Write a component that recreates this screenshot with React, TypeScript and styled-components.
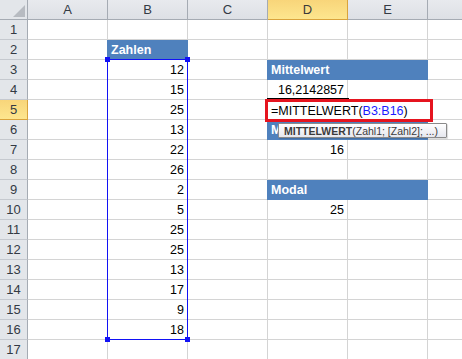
import styled, { createGlobalStyle } from 'styled-components';

const GlobalStyle = createGlobalStyle`
  html, body {
    margin: 0;
    padding: 0;
    background: #ffffff;
    overflow: hidden;
  }
  body {
    font-family: "Liberation Sans", Arial, sans-serif;
  }
`;

const columns = ['A', 'B', 'C', 'D', 'E', 'F'];
const numbers = [12, 15, 25, 13, 22, 26, 2, 5, 25, 25, 13, 17, 9, 18];

type CellData = { text?: string; fill?: boolean; align?: 'left' | 'right' };
type Corner = 'tl' | 'tr' | 'bl' | 'br';

// sheet content keyed by "row:col"
const content: Record<string, CellData> = {
  '2:B': { text: 'Zahlen', fill: true },
  '3:D': { text: 'Mittelwert', fill: true },
  '3:E': { fill: true },
  '4:D': { text: '16,2142857', align: 'right' },
  '6:D': { text: 'Median', fill: true },
  '6:E': { fill: true },
  '7:D': { text: '16', align: 'right' },
  '9:D': { text: 'Modal', fill: true },
  '9:E': { fill: true },
  '10:D': { text: '25', align: 'right' },
};
numbers.forEach((n, i) => {
  content[`${i + 3}:B`] = { text: String(n), align: 'right' };
});

const App = () => {
  const rows = Array.from({ length: 17 }, (_, i) => i + 1);
  return (
    <>
      <GlobalStyle />
      <Sheet>
        <Grid>
          <CornerCell>
            <CornerTriangle />
          </CornerCell>
          {columns.map(c => (
            // column F is cut by the window edge, its letter lies outside the view
            <ColHeader key={c} $selected={c === 'D'}>{c === 'F' ? '' : c}</ColHeader>
          ))}
          {rows.map(r => (
            <Row key={r} r={r} />
          ))}
        </Grid>

        <RangeBox>
          {(['tl', 'tr', 'bl', 'br'] as Corner[]).map(k => (
            <Handle key={k} $corner={k} />
          ))}
        </RangeBox>

        <EditTop />
        <EditBox>
          =MITTELWERT(<Ref>B3:B16</Ref>)
        </EditBox>

        <Tip>
          <b>MITTELWERT</b>(Zahl1; [Zahl2]; ...)
        </Tip>
      </Sheet>
    </>
  );
};

const Row = ({ r }: { r: number }) => (
  <>
    <RowHeader $selected={r === 5}>{r}</RowHeader>
    {columns.map(c => {
      const d = content[`${r}:${c}`] || {};
      return (
        <Cell key={c} $fill={!!d.fill} $align={d.align || 'left'}>
          {d.text}
        </Cell>
      );
    })}
  </>
);

const Sheet = styled.div`
  position: relative;
  width: 462px;
  height: 359px;
  overflow: hidden;
  font-size: 12.5px;
  color: #000;
`;

const Grid = styled.div`
  display: grid;
  grid-template-columns: 28px repeat(6, 80px);
  grid-template-rows: repeat(18, 20px);
`;

const CornerCell = styled.div`
  position: relative;
  box-sizing: border-box;
  background: #e3e6ea;
  border-right: 1px solid #a5abb3;
  border-bottom: 1px solid #a5abb3;
`;

const CornerTriangle = styled.div`
  position: absolute;
  right: 2px;
  bottom: 2px;
  width: 0;
  height: 0;
  border-left: 12px solid transparent;
  border-bottom: 12px solid #b7bbc1;
`;

const ColHeader = styled.div<{ $selected: boolean }>`
  box-sizing: border-box;
  display: flex;
  align-items: center;
  justify-content: center;
  font-size: 13px;
  color: ${p => (p.$selected ? '#3a3a3a' : '#333a44')};
  background: ${p =>
    p.$selected ? 'linear-gradient(#f8d57a, #fde68e)' : 'linear-gradient(#e8eaee, #dde0e5)'};
  border-right: 1px solid ${p => (p.$selected ? '#d9a33c' : '#a5abb3')};
  border-bottom: 1px solid ${p => (p.$selected ? '#d9a33c' : '#a5abb3')};
`;

const RowHeader = styled.div<{ $selected: boolean }>`
  box-sizing: border-box;
  display: flex;
  align-items: center;
  justify-content: center;
  font-size: 13px;
  color: #333a44;
  background: ${p => (p.$selected ? 'linear-gradient(#f8d57a, #fde68e)' : '#e3e6ea')};
  border-right: 1px solid ${p => (p.$selected ? '#d9a33c' : '#a5abb3')};
  border-bottom: 1px solid ${p => (p.$selected ? '#d9a33c' : '#c5c9cf')};
`;

const Cell = styled.div<{ $fill: boolean; $align: 'left' | 'right' }>`
  box-sizing: border-box;
  display: flex;
  align-items: flex-end;
  justify-content: ${p => (p.$align === 'right' ? 'flex-end' : 'flex-start')};
  padding: 0 3px 2px 3px;
  white-space: nowrap;
  overflow: visible;
  background: ${p => (p.$fill ? '#4f81bd' : '#ffffff')};
  color: ${p => (p.$fill ? '#ffffff' : '#000000')};
  font-weight: ${p => (p.$fill ? 700 : 400)};
  border-right: 1px solid ${p => (p.$fill ? '#4f81bd' : '#d4d4d4')};
  border-bottom: 1px solid ${p => (p.$fill ? '#4f81bd' : '#d4d4d4')};
  box-shadow: ${p => (p.$fill ? '-1px 0 0 #4f81bd' : 'none')};
`;

const RangeBox = styled.div`
  position: absolute;
  left: 107px;
  top: 59px;
  width: 81px;
  height: 281px;
  box-sizing: border-box;
  border: 1px solid #1212f5;
`;

const Handle = styled.div<{ $corner: Corner }>`
  position: absolute;
  width: 5px;
  height: 5px;
  background: #1212f5;
  ${p => (p.$corner[0] === 't' ? 'top: -3px;' : 'bottom: -3px;')}
  ${p => (p.$corner[1] === 'l' ? 'left: -3px;' : 'right: -3px;')}
`;

const EditTop = styled.div`
  position: absolute;
  left: 267px;
  top: 98px;
  width: 82px;
  height: 1px;
  background: #000;
`;

const EditBox = styled.div`
  position: absolute;
  left: 265px;
  top: 99px;
  width: 168px;
  height: 23px;
  box-sizing: border-box;
  border: 3px solid #e5141f;
  background: #fff;
  padding-left: 3px;
  display: flex;
  align-items: center;
  white-space: nowrap;
  font-size: 12.5px;
`;

const Ref = styled.span`
  color: #1a1aff;
`;

const Tip = styled.div`
  position: absolute;
  left: 278px;
  top: 123px;
  width: 169px;
  height: 15px;
  box-sizing: border-box;
  border: 1px solid #8a8a8a;
  border-radius: 1px;
  background: linear-gradient(#ffffff, #e6e7ee);
  box-shadow: 1px 1px 1px rgba(0, 0, 0, 0.15);
  padding-left: 5px;
  display: flex;
  align-items: center;
  white-space: nowrap;
  font-size: 10.5px;
  color: #3b3b3b;

  b {
    font-weight: 700;
  }
`;

export default App;
